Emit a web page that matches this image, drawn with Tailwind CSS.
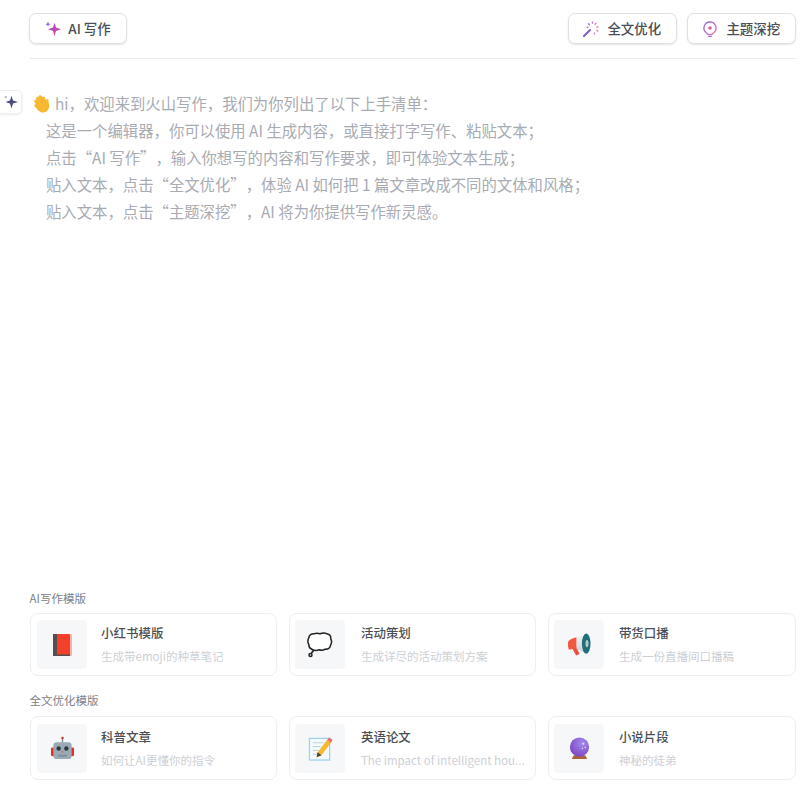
<!doctype html>
<html lang="zh">
<head>
<meta charset="utf-8">
<script src="https://cdn.jsdelivr.net/npm/@tailwindcss/browser@4"></script>
</head>
<body class="bg-white">
<div class="relative flex h-[794px] w-[811px] flex-col overflow-hidden pl-[29.5px] pr-[15.2px] font-['Noto_Sans_CJK_SC','Noto_Sans',sans-serif] text-[#1f2329] [text-spacing-trim:space-all]">
  <header class="flex h-[59px] items-start justify-between border-b border-[#e8eaed] pt-[13px]">
    <button class="-ml-[0.5px] flex h-[31px] w-[98px] items-center justify-center gap-[7px] rounded-[7px] border border-[#dfe1e5] bg-white text-[13.44px] font-medium text-[#4b4f55] shadow-[0_1px_2px_rgba(0,0,0,0.1)]">
      <svg class="h-[16px] w-[16px]" viewBox="0 0 16 16"><defs><linearGradient id="g1" x1="0" y1="0" x2="1" y2="1"><stop offset="0" stop-color="#a050d0"/><stop offset="1" stop-color="#e0409a"/></linearGradient></defs><path d="M9.500 1.800 L11 6.500 L16 8.200 L11 9.900 L9.500 15 L8 9.900 L3 8.200 L8 6.500 Z" fill="url(#g1)"/><path d="M3 .6 L3.800 2.400 L5.600 3.200 L3.800 4 L3 5.800 L2.200 4 L.4 3.200 L2.200 2.400 Z" fill="#8f6ae0"/></svg>
      <span>AI 写作</span>
    </button>
    <div class="flex gap-[10px]">
      <button class="flex h-[31px] w-[109px] items-center justify-center gap-[8px] rounded-[7px] border border-[#dfe1e5] bg-white text-[13.44px] font-medium text-[#4b4f55] shadow-[0_1px_2px_rgba(0,0,0,0.1)]">
        <svg class="h-[16px] w-[16px]" viewBox="0 0 16 16" fill="none"><path d="M1 15 L7 9" stroke="#8058dc" stroke-width="2" stroke-linecap="round"/><g stroke-width="1.500" stroke-linecap="round"><path d="M9.500 1v1.200" stroke="#d08ad8"/><path d="M13 2.300l-.8 1" stroke="#e58ab8"/><path d="M15 6h-1.200" stroke="#e890b0"/><path d="M14.800 10l-1-.5" stroke="#e890b0"/><path d="M11.500 13v-1" stroke="#d08ad8"/><path d="M5.500 2.800l.8.8" stroke="#a77be0"/><path d="M4 6.300h.8" stroke="#a77be0"/></g></svg>
        <span>全文优化</span>
      </button>
      <button class="flex h-[31px] w-[109px] items-center justify-center gap-[8px] rounded-[7px] border border-[#dfe1e5] bg-white text-[13.44px] font-medium text-[#4b4f55] shadow-[0_1px_2px_rgba(0,0,0,0.1)]">
        <svg class="h-[16px] w-[16px]" viewBox="0 0 16 16" fill="none"><defs><linearGradient id="g2" x1="0" y1="0" x2="1" y2="1"><stop offset="0" stop-color="#8f6be0"/><stop offset="1" stop-color="#e870a8"/></linearGradient></defs><path d="M8 1a6 6 0 0 1 4 10.500C10.800 12.500 10 13 9.800 13.500H6.200C6 13 5.200 12.500 4 11.500A6 6 0 0 1 8 1Z" stroke="url(#g2)" stroke-width="1.300"/><path d="M6.500 15.300h3" stroke="#b47ad0" stroke-width="1.200" stroke-linecap="round"/><circle cx="8" cy="7" r="1.800" fill="#e0609c"/></svg>
        <span>主题深挖</span>
      </button>
    </div>
  </header>

  <main class="relative flex-1 pt-[31px] text-[15.36px] leading-[27px] text-[#a8abb2]">
    <p class="flex items-center gap-[3px] pl-[2.500px]">
      <svg class="h-[20px] w-[20px] shrink-0" viewBox="0 0 20 20"><g stroke="#f7b731" stroke-width="3.200" stroke-linecap="round" fill="none"><path d="M6.500 11L3.800 7.200"/><path d="M8.500 9.500L5.600 4.300"/><path d="M10.800 8.500L8.300 2.800"/><path d="M13 8.500L11.500 4.200"/><path d="M4 11.500L7 15"/></g><path d="M5 11L12 7.500L15.500 7C17 8.500 17.500 11 17 13.500C16 18 11.500 19.500 8.500 18C6.500 17 5.500 14.500 5 11Z" fill="#f7b731"/><path d="M15 4.500C15.800 5 16.700 6 17 7.500L13.500 8Z" fill="#f7b731"/></svg>
      <span>hi，欢迎来到火山写作，我们为你列出了以下上手清单：</span>
    </p>
    <div class="pl-[16.500px]">
      <p>这是一个编辑器，你可以使用 AI 生成内容，或直接打字写作、粘贴文本；</p>
      <p>点击“AI 写作”，输入你想写的内容和写作要求，即可体验文本生成；</p>
      <p>贴入文本，点击“全文优化”，体验 AI 如何把 1 篇文章改成不同的文体和风格；</p>
      <p>贴入文本，点击“主题深挖”，AI 将为你提供写作新灵感。</p>
    </div>
    <div class="absolute left-[-29.500px] top-[31px] flex h-[24px] w-[22px] items-center justify-center rounded-r-[5px] border border-l-0 border-[#eceef1] bg-white shadow-[0_1px_3px_rgba(0,0,0,0.08)]">
      <svg class="h-[16px] w-[16px]" viewBox="0 0 16 16"><path d="M8.500 1.800 L10 6.400 L15 8 L10 9.600 L8.500 14.500 L7 9.600 L2.500 8 L7 6.400 Z" fill="#4d4a80"/><circle cx="2.800" cy="3" r="1.100" fill="#a9a6c8"/></svg>
    </div>
  </main>

  <section class="pb-[14px]">
    <h2 class="mb-[7px] text-[11.52px] leading-[16px] font-normal text-[#7d8187]">AI写作模版</h2>
    <div class="grid grid-cols-3 gap-[12px]">
      <div class="flex h-[63.400px] items-center gap-[14px] rounded-[8px] border border-[#eceef1] pl-[6.500px] pr-[8px]">
        <div class="flex h-[49px] w-[50px] shrink-0 items-center justify-center rounded-[4px] bg-[#f6f7f9]">
          <svg class="h-[22px] w-[19px]" viewBox="0 0 19 22"><rect x="4" y="0" width="15" height="22" fill="#f5b5ad" rx="1"/><rect x="0" y="0" width="17" height="22" fill="#f43f2d" rx="1"/><rect x="0" y="0" width="4" height="22" fill="#55504e"/><rect x="0" y="20.500" width="17" height="1.500" fill="#55504e"/></svg>
        </div>
        <div class="min-w-0">
          <div class="text-[12.48px] leading-[19px] font-medium text-[#4b4f55]">小红书模版</div>
          <div class="mt-[4px] truncate text-[11.52px] leading-[18px] text-[#cdd0d5]">生成带emoji的种草笔记</div>
        </div>
      </div>
      <div class="flex h-[63.400px] items-center gap-[15.500px] rounded-[8px] border border-[#eceef1] pl-[5.500px] pr-[8px]">
        <div class="flex h-[49px] w-[50px] shrink-0 items-center justify-center rounded-[4px] bg-[#f6f7f9]">
          <svg class="h-[26px] w-[26px]" viewBox="0 0 26 26" fill="#fff" stroke="#222" stroke-width="1.500"><path d="M7 1.800c2-1 4-.8 6 0 2.500-1 5-1 7 0 2.500.5 4 2.500 3.800 5 1 2 1 4.500-.3 6.500-.5 2.500-2.800 4-5.300 3.800-2 1.500-4 1.500-6 .7-2 .8-5 .8-7-.3-2-.8-3.500-2.500-3.300-4.800-1.200-2-1.200-5 0-7 .2-1.900 2-3.900 5.100-3.900Z"/><path d="M6.500 18.500l-2 2.500" stroke-width="1.800"/><circle cx="3.500" cy="23" r="1.500"/></svg>
        </div>
        <div class="min-w-0">
          <div class="text-[12.48px] leading-[19px] font-medium text-[#4b4f55]">活动策划</div>
          <div class="mt-[4px] truncate text-[11.52px] leading-[18px] text-[#cdd0d5]">生成详尽的活动策划方案</div>
        </div>
      </div>
      <div class="flex h-[63.400px] items-center gap-[14.500px] rounded-[8px] border border-[#eceef1] pl-[5px] pr-[8px]">
        <div class="flex h-[49px] w-[50px] shrink-0 items-center justify-center rounded-[4px] bg-[#f6f7f9]">
          <svg class="h-[25px] w-[25px]" viewBox="0 0 26 26"><defs><linearGradient id="g4" x1="0" y1="0" x2="0" y2="1"><stop offset="0" stop-color="#f4f6f7"/><stop offset="1" stop-color="#c9d0d4"/></linearGradient></defs><path d="M5 16l4.500-1 3.500 8-3.500 1.500Z" fill="#e8503a"/><path d="M1 11.500C1 9 4 7 10 5.500v12c-4 0-8 1-8 1C1 16 1 13.500 1 11.500Z" fill="#f0583f"/><path d="M10 5L19 2v20L10 17.500Z" fill="url(#g4)"/><ellipse cx="20" cy="12" rx="4.500" ry="10.500" fill="#1f6f78"/><ellipse cx="20.800" cy="12" rx="1.600" ry="3.800" fill="#b5c8cc"/></svg>
        </div>
        <div class="min-w-0">
          <div class="text-[12.48px] leading-[19px] font-medium text-[#4b4f55]">带货口播</div>
          <div class="mt-[4px] truncate text-[11.52px] leading-[18px] text-[#cdd0d5]">生成一份直播间口播稿</div>
        </div>
      </div>
    </div>
    <h2 class="mb-[8px] mt-[16px] text-[11.52px] leading-[16px] font-normal text-[#7d8187]">全文优化模版</h2>
    <div class="grid grid-cols-3 gap-[12px]">
      <div class="flex h-[63.600px] items-center gap-[14px] rounded-[8px] border border-[#eceef1] pl-[6.500px] pr-[8px]">
        <div class="flex h-[49px] w-[50px] shrink-0 items-center justify-center rounded-[4px] bg-[#f6f7f9]">
          <svg class="h-[25px] w-[25px]" viewBox="0 0 26 26"><rect x="12.300" y="2" width="1.400" height="5" fill="#7d8b93"/><circle cx="13" cy="2" r="1.300" fill="#d9362b"/><rect x="1" y="12" width="4" height="9" rx="1.500" fill="#d9362b"/><rect x="21" y="12" width="4" height="9" rx="1.500" fill="#d9362b"/><rect x="3.500" y="6.500" width="19" height="17.500" rx="3.500" fill="#9aabb5"/><circle cx="9" cy="13" r="2.300" fill="#2f3a40"/><circle cx="17" cy="13" r="2.300" fill="#2f3a40"/><path d="M12 16l1 1.500 1-1.500Z" fill="#d9362b"/><rect x="8.500" y="19.500" width="9" height="2" fill="#78909c"/></svg>
        </div>
        <div class="min-w-0">
          <div class="text-[12.48px] leading-[19px] font-medium text-[#4b4f55]">科普文章</div>
          <div class="mt-[4px] truncate text-[11.52px] leading-[18px] text-[#cdd0d5]">如何让AI更懂你的指令</div>
        </div>
      </div>
      <div class="flex h-[63.600px] items-center gap-[15.500px] rounded-[8px] border border-[#eceef1] pl-[5.500px] pr-[8px]">
        <div class="flex h-[49px] w-[50px] shrink-0 items-center justify-center rounded-[4px] bg-[#f6f7f9]">
          <svg class="h-[25px] w-[25px]" viewBox="0 0 26 26"><rect x="1.500" y="2.500" width="21" height="22.500" fill="#f4fafe" stroke="#9fd0ef" stroke-width="1.300"/><path d="M5 7h11M5 11h8M5 15h6M5 19h5" stroke="#b9cfdc" stroke-width="1"/><path d="M9 22l1-5L20 4l4 3L14 20Z" fill="#f5b82e"/><path d="M20 4l2-2.500 3.500 2.500-1.500 3Z" fill="#ee6a6a"/><path d="M9 22l1-5 4 3Z" fill="#4b4238"/></svg>
        </div>
        <div class="min-w-0">
          <div class="text-[12.48px] leading-[19px] font-medium text-[#4b4f55]">英语论文</div>
          <div class="mt-[4px] text-[11.52px] leading-[18px] whitespace-nowrap text-[#cdd0d5]">The impact of intelligent hou...</div>
        </div>
      </div>
      <div class="flex h-[63.600px] items-center gap-[14.500px] rounded-[8px] border border-[#eceef1] pl-[5px] pr-[8px]">
        <div class="flex h-[49px] w-[50px] shrink-0 items-center justify-center rounded-[4px] bg-[#f6f7f9]">
          <svg class="h-[25px] w-[25px]" viewBox="0 0 26 26"><defs><radialGradient id="g3" cx=".65" cy=".3" r=".8"><stop offset="0" stop-color="#a58bee"/><stop offset="1" stop-color="#7a3fc0"/></radialGradient></defs><path d="M7 20h12l2 4H5Z" fill="#a9643d"/><circle cx="13" cy="11.500" r="10" fill="url(#g3)"/><circle cx="17" cy="8" r="1" fill="#e8e4ff"/><circle cx="19" cy="12" r=".8" fill="#e8e4ff"/><circle cx="16" cy="13" r=".7" fill="#e8e4ff"/></svg>
        </div>
        <div class="min-w-0">
          <div class="text-[12.48px] leading-[19px] font-medium text-[#4b4f55]">小说片段</div>
          <div class="mt-[4px] truncate text-[11.52px] leading-[18px] text-[#cdd0d5]">神秘的徒弟</div>
        </div>
      </div>
    </div>
  </section>
</div>
</body>
</html>
